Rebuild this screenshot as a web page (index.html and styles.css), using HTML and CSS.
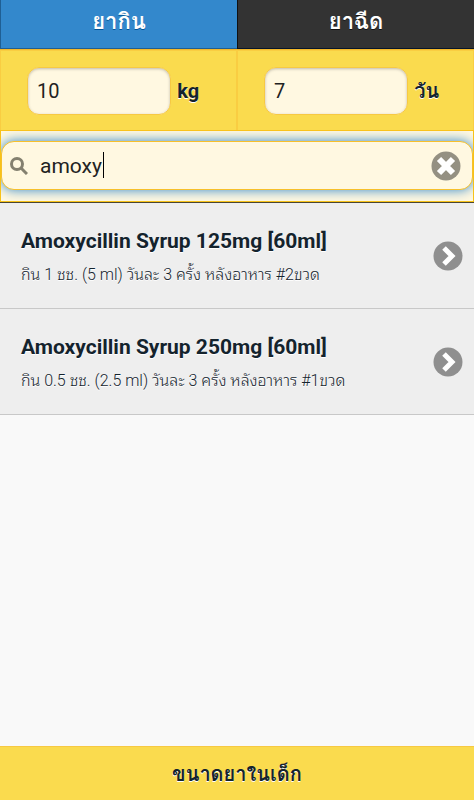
FILE: index.html
```html
<!DOCTYPE html>
<html lang="th">
<head>
    <meta charset="UTF-8">
    <meta name="viewport" content="width=device-width, initial-scale=1.0">
    <title>ขนาดยาในเด็ก</title>
    <link rel="stylesheet" href="styles.css">
</head>
<body>
    <nav class="tabs">
        <a href="#oral" class="tab active">ยากิน</a>
        <a href="#injection" class="tab">ยาฉีด</a>
    </nav>

    <form class="params">
        <div class="param">
            <input type="text" id="weight" value="10">
            <label for="weight">kg</label>
        </div>
        <div class="param">
            <input type="text" id="days" value="7">
            <label for="days">วัน</label>
        </div>
    </form>

    <form class="search">
        <div class="search-box">
            <svg class="search-icon" viewBox="0 0 18 18" aria-hidden="true">
                <circle cx="7" cy="7" r="5.5"/>
                <path d="M11 11l6 6"/>
            </svg>
            <div class="search-text">
                <input type="text" id="search" value="amoxy" aria-label="ค้นหา">
                <span class="caret"></span>
            </div>
            <button type="button" class="clear" aria-label="ล้าง">
                <svg viewBox="0 0 30 30" aria-hidden="true">
                    <circle cx="15" cy="15" r="14.5"/>
                    <path d="M8 8l14 14M22 8l-14 14"/>
                </svg>
            </button>
        </div>
    </form>

    <ul class="drugs">
        <li>
            <a href="#amoxy-125">
                <div class="info">
                    <h2>Amoxycillin Syrup 125mg [60ml]</h2>
                    <p>กิน 1 ชช. (5 ml) วันละ 3 ครั้ง หลังอาหาร #2ขวด</p>
                </div>
                <svg class="arrow" viewBox="0 0 30 30" aria-hidden="true">
                    <circle cx="15" cy="15" r="14.5"/>
                    <path d="M11 7l8 8-8 8"/>
                </svg>
            </a>
        </li>
        <li>
            <a href="#amoxy-250">
                <div class="info">
                    <h2>Amoxycillin Syrup 250mg [60ml]</h2>
                    <p>กิน 0.5 ชช. (2.5 ml) วันละ 3 ครั้ง หลังอาหาร #1ขวด</p>
                </div>
                <svg class="arrow" viewBox="0 0 30 30" aria-hidden="true">
                    <circle cx="15" cy="15" r="14.5"/>
                    <path d="M11 7l8 8-8 8"/>
                </svg>
            </a>
        </li>
    </ul>

    <footer class="footer">
        <h1>ขนาดยาในเด็ก</h1>
    </footer>
</body>
</html>
```
FILE: styles.css
```css
*{
    margin: 0;
    padding: 0;
    box-sizing: border-box;
}
body{
    display: flex;
    flex-direction: column;
    min-height: 100vh;
    background-color: #f9f9f9;
    color: #14232d;
    font-family: Roboto, Loma, Garuda, "Noto Sans", sans-serif;
    font-size: 20px;
}
a{
    color: inherit;
    text-decoration: none;
}
input, button{
    font: inherit;
    color: #222;
    border: none;
    background: none;
    outline: none;
}
/* tabs */
.tabs{
    display: grid;
    grid-template-columns: 1fr 1fr;
}
.tab{
    height: 49px;
    line-height: 44px;
    text-align: center;
    font-size: 22px;
    font-weight: bold;
    color: #fff;
    background-color: #333;
    border-left: 1px solid #111;
    border-bottom: 1px solid #06152b;
    text-shadow: 0 1px 0 #111;
}
.tab.active{
    background-color: #3388cc;
    border-color: #1f5f94;
    text-shadow: 0 1px 0 #059;
}
/* weight and days */
.params{
    display: grid;
    grid-template-columns: 1fr 1fr;
    border-top: 1px solid #f5b92a;
    border-bottom: 1px solid #f9c21c;
    background-color: #fadb4e;
}
.param{
    display: flex;
    align-items: center;
    gap: 6px;
    height: 80px;
    padding-left: 26px;
    border: 2px solid #f9cd42;
    border-width: 1px 1px 0;
}
.param input{
    width: 69%;
    height: 48px;
    padding: 0 9px;
    border: 1px solid #f7c942;
    border-radius: 12px;
    background-color: #fff8e1;
    box-shadow: inset 0 1px 3px rgba(0,0,0,.25);
}
.param label{
    font-weight: bold;
    text-shadow: 0 1px 0 #fff;
}
/* search */
.search{
    padding: 10px 0 11px;
    background-color: #fff8e1;
    border: 1px solid #f7c218;
    border-top: none;
    overflow: hidden;
}
.search-box{
    display: flex;
    align-items: center;
    gap: 12px;
    height: 49px;
    padding: 0 11px 0 8px;
    border: 1px solid #f7c02b;
    border-radius: 13px;
    background-color: #fff8e1;
    box-shadow: 0 0 12px #3388cc;
}
.search-icon{
    width: 18px;
    height: 18px;
    fill: none;
    stroke: #84806f;
    stroke-width: 3;
}
.search-text{
    flex: 1;
    display: flex;
    position: relative;
}
.search-text input{
    width: 100%;
    height: 36px;
    font-size: 21px;
}
.caret{
    position: absolute;
    left: 63px;
    top: 4px;
    width: 1px;
    height: 26px;
    background-color: #000;
}
.clear{
    width: 30px;
    height: 30px;
    cursor: pointer;
}
.clear svg, .arrow{
    display: block;
    width: 30px;
    height: 30px;
    fill: #8f8f8f;
}
.clear svg{
    fill: #949082;
}
.clear path, .arrow path{
    fill: none;
    stroke: #fff;
    stroke-width: 6;
}
.arrow path{
    stroke-width: 5;
}
/* results */
.drugs{
    flex: 1;
    list-style: none;
    border-top: 1px solid #4a4631;
}
.drugs a{
    display: flex;
    align-items: center;
    justify-content: space-between;
    height: 106px;
    padding: 0 11px 0 21px;
    background-color: #eee;
    border-bottom: 1px solid #c8c8c8;
    text-shadow: 0 1px 0 #fff;
}
.info{
    padding-top: 4px;
}
.drugs h2{
    font-size: 21px;
    line-height: 34px;
}
.drugs p{
    font-family: Roboto, "Noto Sans Thai Looped", "Noto Sans", sans-serif;
    font-size: 16px;
    font-weight: 300;
    line-height: 34px;
}
/* footer */
.footer{
    height: 54px;
    line-height: 54px;
    text-align: center;
    background-color: #fadb4e;
    border-top: 1px solid #f7c942;
    text-shadow: 0 1px 0 #fff;
}
.footer h1{
    font-size: 20px;
}
```
